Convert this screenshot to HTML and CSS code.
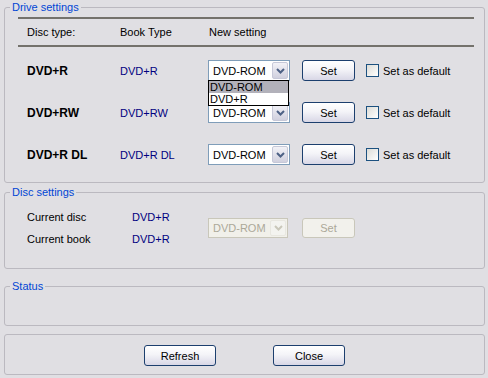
FILE: index.html
```html
<!DOCTYPE html>
<html lang="en">
<head>
    <meta charset="UTF-8">
    <meta name="viewport" content="width=device-width, initial-scale=1.0">
    <title>Drive settings</title>
    <link rel="stylesheet" href="styles.css">
</head>
<body>
    <div class="window">
        <fieldset class="group drive">
            <legend>Drive settings</legend>
            <div class="drive-head">
                <span>Disc type:</span>
                <span>Book Type</span>
                <span>New setting</span>
            </div>
            <div class="drive-rows">
                <div class="drive-row">
                    <span class="disc">DVD+R</span>
                    <span class="value">DVD+R</span>
                    <div class="combo-wrap">
                        <div class="combo">
                            <span class="combo-text">DVD-ROM</span>
                            <span class="combo-btn"><svg width="9" height="6" viewBox="0 0 9 6"><path d="M1 1 L4.5 4.5 L8 1" fill="none" stroke="#4d6185" stroke-width="2"/></svg></span>
                        </div>
                        <ul class="combo-list">
                            <li class="selected">DVD-ROM</li>
                            <li>DVD+R</li>
                        </ul>
                    </div>
                    <button class="btn">Set</button>
                    <label class="check"><span class="box"></span>Set as default</label>
                </div>
                <div class="drive-row">
                    <span class="disc">DVD+RW</span>
                    <span class="value">DVD+RW</span>
                    <div class="combo">
                        <span class="combo-text">DVD-ROM</span>
                        <span class="combo-btn"><svg width="9" height="6" viewBox="0 0 9 6"><path d="M1 1 L4.5 4.5 L8 1" fill="none" stroke="#4d6185" stroke-width="2"/></svg></span>
                    </div>
                    <button class="btn">Set</button>
                    <label class="check"><span class="box"></span>Set as default</label>
                </div>
                <div class="drive-row">
                    <span class="disc">DVD+R DL</span>
                    <span class="value">DVD+R DL</span>
                    <div class="combo">
                        <span class="combo-text">DVD-ROM</span>
                        <span class="combo-btn"><svg width="9" height="6" viewBox="0 0 9 6"><path d="M1 1 L4.5 4.5 L8 1" fill="none" stroke="#4d6185" stroke-width="2"/></svg></span>
                    </div>
                    <button class="btn">Set</button>
                    <label class="check"><span class="box"></span>Set as default</label>
                </div>
            </div>
        </fieldset>

        <fieldset class="group disc-group">
            <legend>Disc settings</legend>
            <div class="disc-grid">
                <span>Current disc</span>
                <span class="value">DVD+R</span>
                <div class="combo disabled">
                    <span class="combo-text">DVD-ROM</span>
                    <span class="combo-btn"><svg width="9" height="6" viewBox="0 0 9 6"><path d="M1 1 L4.5 4.5 L8 1" fill="none" stroke="#c9c7ba" stroke-width="2"/></svg></span>
                </div>
                <button class="btn disabled">Set</button>
                <span>Current book</span>
                <span class="value">DVD+R</span>
            </div>
        </fieldset>

        <fieldset class="group status">
            <legend>Status</legend>
        </fieldset>

        <fieldset class="group actions">
            <button class="btn wide">Refresh</button>
            <button class="btn wide">Close</button>
        </fieldset>
    </div>
</body>
</html>
```

FILE: styles.css
```css
body {
    margin: 0;
    background: #e0dfe3;
    font-family: "Liberation Sans", Arial, sans-serif;
    font-size: 11px;
    color: #000;
}

.window {
    width: 488px;
    height: 378px;
    padding: 0 3px 0 4px;
    box-sizing: border-box;
    overflow: hidden;
}

.group {
    margin: 0;
    border: 1px solid #bbb9c0;
    border-radius: 3px;
    padding: 0;
    min-width: 0;
}

.group legend {
    color: #0046d5;
    line-height: 14px;
    padding: 0 2px;
    margin-left: 5px;
}

/* drive settings */
.drive {
    padding: 3px 0 17px;
}

.drive-head {
    display: grid;
    grid-template-columns: 93px 89px auto;
    align-items: center;
    height: 26px;
    margin: 0 10px 0 13px;
    padding-left: 9px;
    border-top: 2px solid #74726c;
    border-bottom: 2px solid #74726c;
}

.drive-rows {
    display: flex;
    flex-direction: column;
    gap: 21px;
    margin-top: 13px;
    padding-left: 22px;
}

.drive-row {
    display: grid;
    grid-template-columns: 93px 88px 94px 64px auto;
    align-items: center;
    height: 21px;
}

.disc {
    font-weight: bold;
    font-size: 12px;
}

.value {
    color: #000080;
}

/* combo box */
.combo-wrap {
    position: relative;
}

.combo {
    display: flex;
    align-items: center;
    justify-content: space-between;
    width: 82px;
    height: 21px;
    box-sizing: border-box;
    border: 1px solid #7f9db9;
    background: #fff;
    padding: 1px;
}

.combo-text {
    padding-left: 3px;
}

.combo-btn {
    display: flex;
    align-items: center;
    justify-content: center;
    width: 16px;
    height: 17px;
    box-sizing: border-box;
    border: 1px solid #c6c8d8;
    border-radius: 2px;
    background: linear-gradient(#f2f2f7, #d0d0de);
}

.combo.disabled {
    width: 80px;
    height: 20px;
    border-color: #c9c7ba;
    background: #f1f0ea;
    color: #aca899;
}

.combo.disabled .combo-btn {
    height: 16px;
    border-color: #e8e7e0;
    background: #f3f3ef;
}

.combo-list {
    position: absolute;
    left: 0;
    top: 20px;
    width: 81px;
    margin: 0;
    padding: 0;
    list-style: none;
    border: 1px solid #000;
    background: #fff;
    box-sizing: border-box;
}

.combo-list li {
    height: 12px;
    line-height: 12px;
    padding-left: 1px;
}

.combo-list li.selected {
    background: #b2b1ba;
}

/* buttons */
.btn {
    width: 53px;
    height: 21px;
    padding: 0;
    border: 1px solid #1c3f6e;
    border-radius: 3px;
    background: linear-gradient(#ffffff 0%, #f4f4f8 45%, #d8d7e6 100%);
    font-family: inherit;
    font-size: 11px;
    color: #000;
}

.btn.disabled {
    border-color: #c9c7ba;
    background: #f2f1ec;
    color: #aca899;
}

.btn.wide {
    width: 72px;
}

/* checkbox */
.check {
    display: flex;
    align-items: center;
    gap: 4px;
}

.box {
    width: 13px;
    height: 13px;
    box-sizing: border-box;
    border: 1px solid #1c5180;
    background: linear-gradient(135deg, #dcdcd7, #ffffff);
}

/* disc settings */
.disc-group {
    margin-top: 2px;
    padding: 7px 0 18px;
}

.disc-grid {
    display: grid;
    grid-template-columns: 105px 76px 94px auto;
    grid-template-rows: 22px 22px;
    align-items: center;
    padding-left: 22px;
}

.disc-grid .combo {
    grid-column: 3;
    grid-row: 1 / span 2;
}

.disc-grid .btn {
    grid-column: 4;
    grid-row: 1 / span 2;
    justify-self: start;
    height: 20px;
}

/* status */
.status {
    margin-top: 10px;
    height: 47px;
    box-sizing: border-box;
}

/* bottom buttons */
.actions {
    margin-top: 8px;
    display: flex;
    justify-content: center;
    gap: 57px;
    padding: 10px 0 8px;
}
```
